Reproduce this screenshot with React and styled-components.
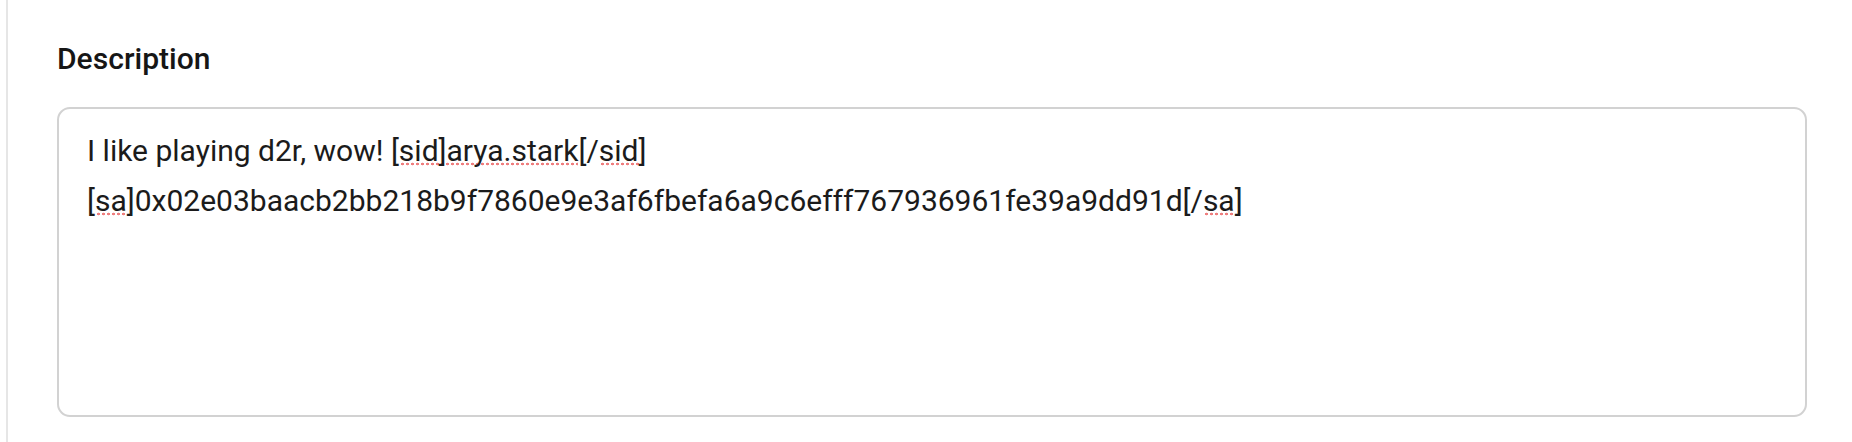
import React from 'react'
import styled, { createGlobalStyle } from 'styled-components';

const GlobalStyle = createGlobalStyle`
    html, body{
        margin: 0;
        padding: 0;
        background: #ffffff;
    }
    body{
        font-family: Roboto, "Noto Sans", "Liberation Sans", sans-serif;
        color: #1b1b1b;
    }
`

const Page = styled.main`
    min-height: 100vh;
    padding-left: 6px;
    box-sizing: border-box;
    display: flex;
`

const Section = styled.section`
    flex: 1;
    border-left: 2px solid #e6e6e6;
    padding: 41px 45px 0 49px;
    display: flex;
    flex-direction: column;
    gap: 31px;
`

const Label = styled.label`
    font-family: "Roboto Medium", Roboto, "Noto Sans", sans-serif;
    font-size: 30px;
    font-weight: 500;
    line-height: normal;
    color: #161616;
`

const Field = styled.div`
    height: 310px;
    box-sizing: border-box;
    border: 2px solid #d2d2d2;
    border-radius: 13px;
    padding: 17px 28px;
    font-size: 30px;
    line-height: 50px;
    color: #1b1b1b;
    white-space: pre-wrap;
    outline: none;
`

// spellcheck squiggle, the dotted red line under unknown words
const Misspelled = styled.span`
    background-image: radial-gradient(circle, #ef7f7f 1.2px, transparent 1.6px);
    background-size: 5px 4px;
    background-repeat: repeat-x;
    background-position: 1px calc(100% - 2px);
`

export default function App() {
    return (
        <>
            <GlobalStyle />
            <Page>
                <Section>
                    <Label htmlFor="description">Description</Label>
                    <Field id="description" role="textbox" aria-multiline="true">
                        I like playing d2r, wow! [<Misspelled>sid]arya.stark</Misspelled>[/<Misspelled>sid</Misspelled>]
                        {'\n'}[<Misspelled>sa</Misspelled>]0x02e03baacb2bb218b9f7860e9e3af6fbefa6a9c6efff767936961fe39a9dd91d[/<Misspelled>sa</Misspelled>]
                    </Field>
                </Section>
            </Page>
        </>
    )
}
